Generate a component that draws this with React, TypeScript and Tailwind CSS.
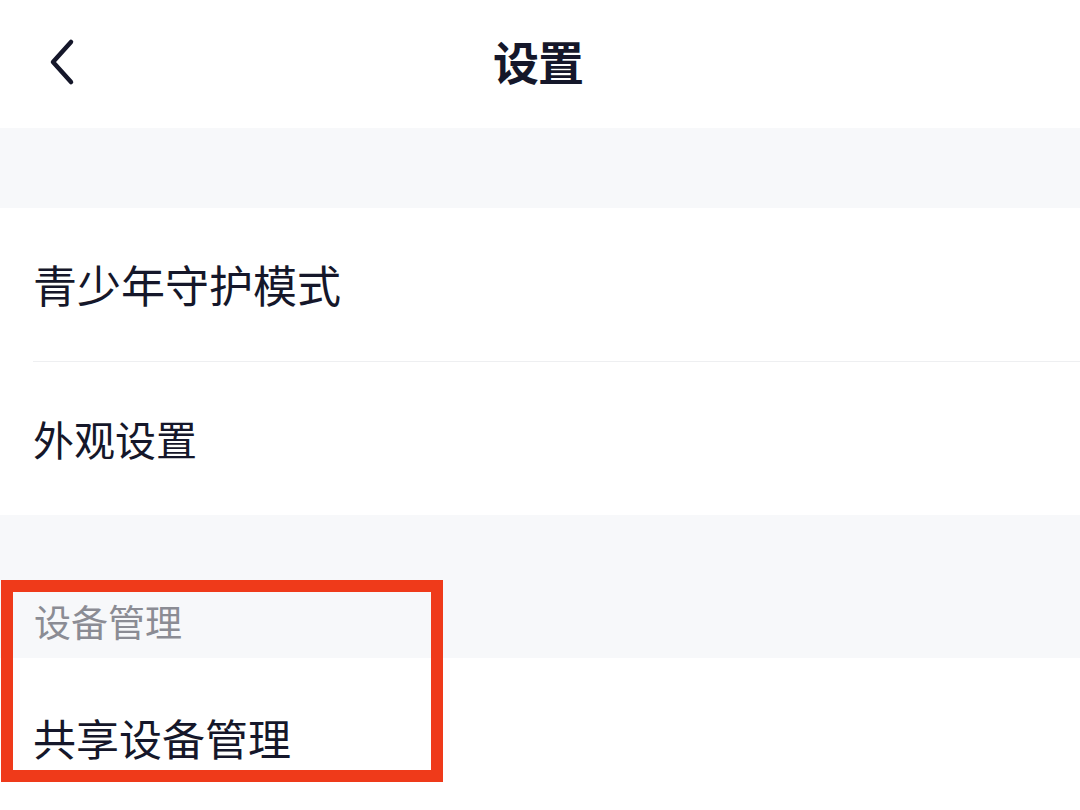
const font = `font-['Noto_Sans_CJK_SC','Noto_Sans',sans-serif]`;

const BackIcon = () => (
  <svg width="30" height="48" viewBox="0 0 30 48" fill="none">
    <path
      d="M24 4 L6 24 L24 44"
      stroke="#15172a"
      strokeWidth="4.5"
      strokeLinecap="round"
      strokeLinejoin="round"
    />
  </svg>
);

export default function App() {
  return (
    <div className={`relative w-[1080px] h-[810px] overflow-hidden bg-white text-[#15172a] ${font}`}>
      <div className="relative h-[128px] flex items-center justify-center">
        <button className="absolute left-[47px] top-[38px]">
          <BackIcon />
        </button>
        <h1 className="text-[46px] font-bold leading-none tracking-[-1px] pb-[8px] pr-[4px]">设置</h1>
      </div>

      <div className="h-[80px] bg-[#f7f8fa]" />

      <div className="bg-white pl-[33px]">
        <div className="h-[154px] flex items-center border-b border-[#eeeff1]">
          <span className="text-[44px] leading-none pb-[2px]">青少年守护模式</span>
        </div>
        <div className="h-[153px] flex items-center">
          <span className="text-[41px] leading-none">外观设置</span>
        </div>
      </div>

      <div className="h-[143px] bg-[#f7f8fa] flex items-end pl-[34px] pb-[18px]">
        <span className="text-[37px] leading-none text-[#8b8c94]">设备管理</span>
      </div>

      <div className="h-[152px] bg-white pl-[33px] pt-[58px]">
        <span className="text-[43px] leading-none">共享设备管理</span>
      </div>

      <div className="absolute left-[1px] top-[580px] w-[442px] h-[202px] border-[12px] border-[#ef3a1a]" />
    </div>
  );
}
